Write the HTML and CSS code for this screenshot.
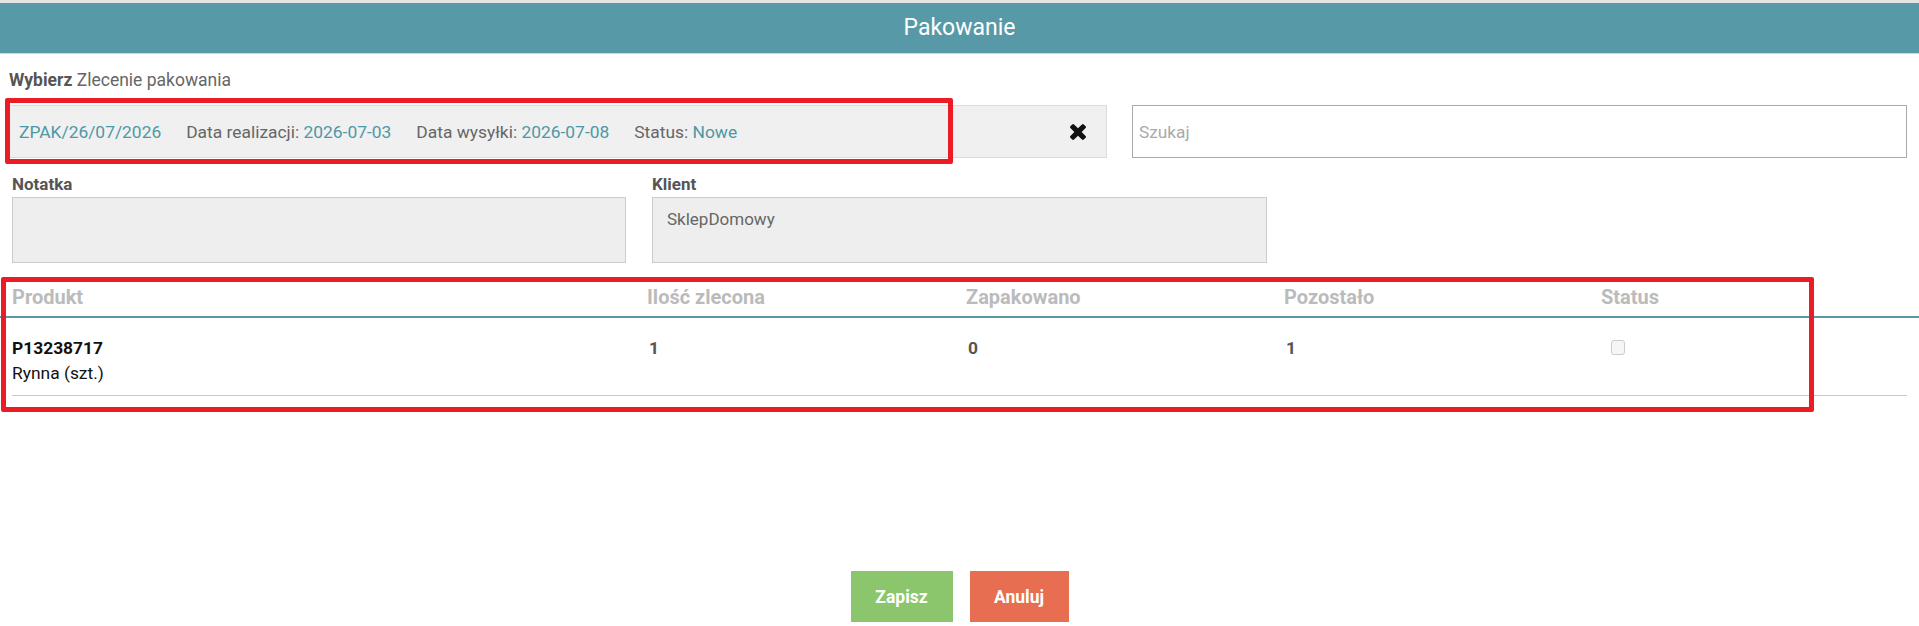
FILE: index.html
```html
<!DOCTYPE html>
<html lang="pl">
<head>
<meta charset="utf-8">
<title>Pakowanie</title>
<link rel="stylesheet" href="styles.css">
</head>
<body>
<div class="page">
  <header class="titlebar">Pakowanie</header>

  <main class="content">
    <div class="pick-label"><b>Wybierz</b> Zlecenie pakowania</div>

    <div class="pick-row">
      <div class="order-select">
        <span class="order-no">ZPAK/26/07/2026</span>
        <span class="meta">Data realizacji: <span class="val">2026-07-03</span></span>
        <span class="meta">Data wysyłki: <span class="val">2026-07-08</span></span>
        <span class="meta">Status: <span class="val">Nowe</span></span>
        <button class="clear" type="button" aria-label="Wyczyść">
          <svg viewBox="302 366 1188 1188" width="16" height="16" aria-hidden="true">
            <path fill="#111" d="M1490 1322q0 40-28 68l-136 136q-28 28-68 28t-68-28l-294-294-294 294q-28 28-68 28t-68-28l-136-136q-28-28-28-68t28-68l294-294-294-294q-28-28-28-68t28-68l136-136q28-28 68-28t68 28l294 294 294-294q28-28 68-28t68 28l136 136q28 28 28 68t-28 68l-294 294 294 294q28 28 28 68z"/>
          </svg>
        </button>
      </div>
      <input class="search" type="text" placeholder="Szukaj">
    </div>

    <div class="fields">
      <div class="field">
        <label class="field-label">Notatka</label>
        <div class="field-box"></div>
      </div>
      <div class="field">
        <label class="field-label">Klient</label>
        <div class="field-box">SklepDomowy</div>
      </div>
    </div>
  </main>

  <section class="items">
    <div class="items-head">
      <div>Produkt</div>
      <div>Ilość zlecona</div>
      <div>Zapakowano</div>
      <div>Pozostało</div>
      <div>Status</div>
    </div>
    <div class="items-row">
      <div class="product">
        <div class="code">P13238717</div>
        <div class="name">Rynna (szt.)</div>
      </div>
      <div class="num">1</div>
      <div class="num">0</div>
      <div class="num">1</div>
      <div><span class="check"></span></div>
    </div>
  </section>

  <div class="actions">
    <button class="btn btn-save" type="button">Zapisz</button>
    <button class="btn btn-cancel" type="button">Anuluj</button>
  </div>

  <div class="mark mark-order"></div>
  <div class="mark mark-items"></div>
</div>
</body>
</html>
```

FILE: styles.css
```css
body {
  margin: 0;
  background: #fff;
  color: #666;
  font-family: Roboto, "Liberation Sans", sans-serif;
}

.page {
  position: relative;
  min-height: 626px;
}

/* top title bar */
.titlebar {
  border-top: 3px solid #e4e4e4;
  border-bottom: 1px solid #d6d6d6;
  background: #5899a7;
  color: #fff;
  height: 50px;
  line-height: 50px;
  text-align: center;
  font-size: 23px;
}

.content {
  padding: 16px 12px 0 9px;
}

.pick-label {
  font-size: 17.5px;
  line-height: 20px;
  color: #666;
}

.pick-label b {
  color: #555;
}

/* order selector + search */
.pick-row {
  display: flex;
  gap: 25px;
  margin-top: 15px;
}

.order-select {
  flex: 0 0 1098px;
  box-sizing: border-box;
  height: 53px;
  display: flex;
  align-items: center;
  padding: 0 20px 0 9px;
  background: #f0f0f0;
  border: 1px solid #dcdcdc;
  font-size: 17.4px;
}

.order-no,
.meta {
  margin-right: 25px;
}

.order-no,
.val {
  color: #4d98a6;
}

.meta {
  color: #666;
}

.clear {
  margin-left: auto;
  padding: 0;
  border: 0;
  background: none;
  display: flex;
}

.search {
  flex: 1;
  box-sizing: border-box;
  height: 53px;
  margin: 0;
  padding: 0 6px;
  border: 1px solid #aaa;
  font-family: Roboto, "Liberation Sans", sans-serif;
  font-size: 17.3px;
  color: #555;
}

.search::placeholder {
  color: #aaa;
}

/* note + client */
.fields {
  display: grid;
  grid-template-columns: 614px 615px;
  column-gap: 26px;
  margin: 16px 0 0 3px;
}

.field-label {
  display: block;
  font-weight: 700;
  font-size: 17px;
  line-height: 20px;
  color: #555;
  margin-bottom: 3px;
}

.field-box {
  box-sizing: border-box;
  height: 66px;
  padding: 11px 14px;
  background: #eee;
  border: 1px solid #ccc;
  font-size: 17px;
  line-height: 20px;
  color: #666;
}

/* items table */
.items {
  margin-top: 20px;
}

.items-head,
.items-row {
  display: grid;
  grid-template-columns: 635px 319px 318px 317px 1fr;
}

.items-head {
  padding: 4px 0 9px 12px;
  border-bottom: 2px solid #5899a7;
  font-weight: 700;
  font-size: 20px;
  line-height: 20px;
  color: #bbb;
}

.items-row {
  margin: 0 12px;
  padding: 18px 0 9px;
  border-bottom: 1px solid #c8c8c8;
  font-size: 17.4px;
  line-height: 25px;
}

.code {
  font-weight: 700;
  color: #111;
}

.name {
  color: #111;
}

.num {
  font-weight: 700;
  color: #555;
  padding-left: 2px;
}

.check {
  display: block;
  box-sizing: border-box;
  width: 14px;
  height: 15px;
  margin: 4px 0 0 10px;
  border: 1px solid #ccc;
  border-radius: 3px;
  background: #f6f6f6;
}

/* bottom buttons */
.actions {
  display: flex;
  justify-content: center;
  gap: 17px;
  margin-top: 175px;
}

.btn {
  height: 51px;
  border: 0;
  padding: 0;
  color: #fff;
  font-family: Roboto, "Liberation Sans", sans-serif;
  font-weight: 700;
  font-size: 17.5px;
}

.btn-save {
  width: 102px;
  background: #8cc66c;
}

.btn-cancel {
  width: 99px;
  background: #e86e52;
}

/* red highlight frames */
.mark {
  position: absolute;
  box-sizing: border-box;
  border: 5px solid #ec1c27;
  border-radius: 2px;
}

.mark-order {
  left: 5px;
  top: 98px;
  width: 948px;
  height: 66px;
}

.mark-items {
  left: 1px;
  top: 277px;
  width: 1813px;
  height: 135px;
}
```
